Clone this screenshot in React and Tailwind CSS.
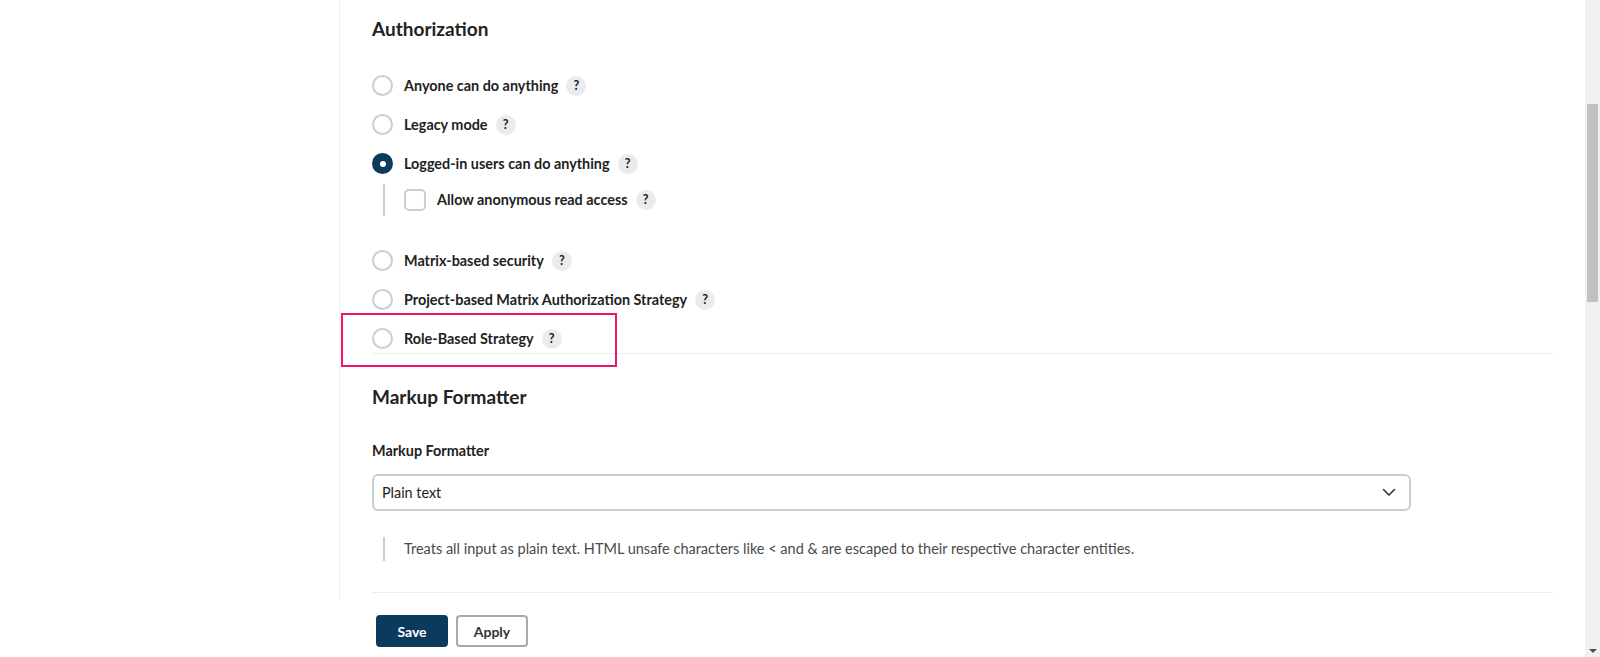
import React from "react";

const FONT = { fontFamily: "Lato, 'Noto Sans', sans-serif" };

const OPTIONS = [
  { label: "Anyone can do anything" },
  { label: "Legacy mode" },
  { label: "Logged-in users can do anything", checked: true },
];

const MORE_OPTIONS = [
  { label: "Matrix-based security" },
  { label: "Project-based Matrix Authorization Strategy" },
];

function Help() {
  return (
    <span className="ml-2 flex h-5 w-5 shrink-0 items-center justify-center rounded-full bg-[#ebebeb] pt-[1px] text-[12.5px] font-bold text-[#15202e]">
      ?
    </span>
  );
}

function Radio({ checked }) {
  if (checked) {
    return (
      <span className="flex h-[21px] w-[21px] shrink-0 items-center justify-center rounded-full bg-[#0b3a5d]">
        <span className="h-[6px] w-[6px] rounded-full bg-white" />
      </span>
    );
  }
  return <span className="h-[21px] w-[21px] shrink-0 rounded-full border-2 border-[#c5cfd4] bg-white" />;
}

function RadioRow({ label, checked, className = "h-[39px]" }) {
  return (
    <div className={`flex items-center ${className}`}>
      <Radio checked={checked} />
      <span className="ml-[11px] text-[14.4px] font-bold text-[#222]">{label}</span>
      <Help />
    </div>
  );
}

export default function App() {
  return (
    <div className="relative flex h-[657px] w-[1600px] overflow-hidden bg-white text-[#222]" style={FONT}>
      <div className="flex flex-1 flex-col">
        <div className="flex">
          <div className="w-[339px] shrink-0" />
          <div className="h-[600px] flex-1 border-l border-[#f0f0f0] pl-[32px] pr-[32px]">
            <h2 className="mt-[15px] h-[28px] text-[19px] font-bold leading-[28px] text-[#222]">Authorization</h2>

            <div className="mt-[23px]">
              {OPTIONS.map((o) => (
                <RadioRow key={o.label} {...o} />
              ))}
              <div className="flex h-[34px] items-center pl-[11px]">
                <span className="h-[32px] w-[2px] bg-[#c5cfd4]" />
                <span className="ml-[19px] h-[22px] w-[22px] shrink-0 rounded-[5px] border-2 border-[#c5cfd4] bg-white" />
                <span className="ml-[11px] text-[14.4px] font-bold text-[#222]">Allow anonymous read access</span>
                <Help />
              </div>
              <div className="mt-[24px]">
                {MORE_OPTIONS.map((o) => (
                  <RadioRow key={o.label} {...o} />
                ))}
                <RadioRow label="Role-Based Strategy" className="-mb-[5px] h-[39px]" />
              </div>
            </div>

            <div className="border-t border-[#ededed] pt-[29px]">
              <h2 className="h-[28px] text-[19px] font-bold leading-[28px] text-[#222]">Markup Formatter</h2>
              <div className="mt-[30px] h-[20px] text-[14.4px] font-bold leading-[20px] text-[#222]">Markup Formatter</div>
              <div className="mt-[13px] flex h-[37px] w-[1039px] items-center justify-between rounded-[6px] border-2 border-[#c5cfd4] pl-[8px] pr-[13px]">
                <span className="text-[14.4px] text-[#222]">Plain text</span>
                <svg width="14" height="9" viewBox="0 0 14 9" fill="none">
                  <path d="M1.5 1.5L7 7L12.5 1.5" stroke="#333" strokeWidth="1.6" strokeLinecap="round" strokeLinejoin="round" />
                </svg>
              </div>
              <div className="mt-[26px] flex h-[24px] items-center pl-[11px]">
                <span className="h-[24px] w-[2px] bg-[#c5cfd4]" />
                <span className="ml-[19px] text-[14.5px] text-[#4a4a4a]">
                  Treats all input as plain text. HTML unsafe characters like &lt; and &amp; are escaped to their respective character entities.
                </span>
              </div>
              <div className="mt-[31px] border-t border-[#ededed]" />
            </div>
          </div>
        </div>
        <div className="flex gap-[8px] pl-[376px] pt-[15px]">
          <button className="h-[32px] w-[72px] rounded-[4px] bg-[#0b3a5d] text-[14px] font-bold text-white">Save</button>
          <button className="h-[32px] w-[72px] rounded-[4px] border-2 border-[#a0abb3] bg-white text-[14px] font-bold text-[#333]">
            Apply
          </button>
        </div>
      </div>

      <div className="relative flex w-[15px] shrink-0 flex-col bg-[#f1f1f1]">
        <div className="mx-[2px] mt-[104px] h-[198px] bg-[#c1c1c1]" />
        <div className="mt-auto mb-[4px] flex justify-center">
          <span className="h-0 w-0 border-l-[4px] border-r-[4px] border-t-[4px] border-l-transparent border-r-transparent border-t-[#505050]" />
        </div>
      </div>

      <div className="pointer-events-none absolute left-[341px] top-[313px] h-[54px] w-[276px] border-2 border-[#f0146e]" />
    </div>
  );
}
